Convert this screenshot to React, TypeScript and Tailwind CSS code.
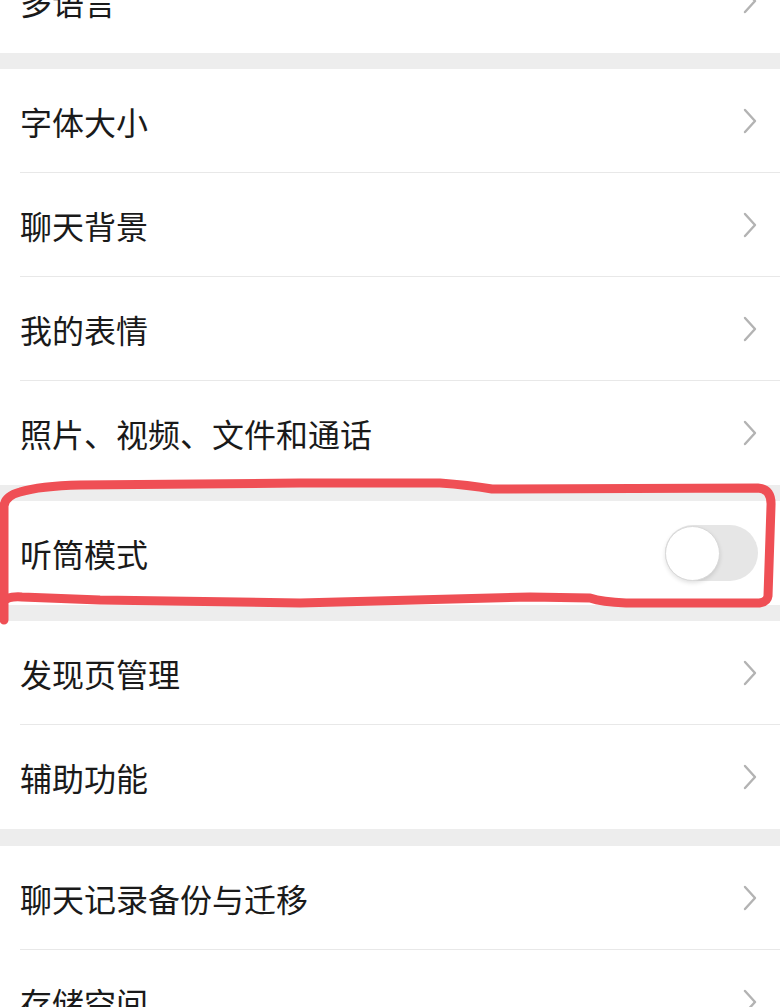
import React from "react";

const font = {
  fontFamily: '"Noto Sans CJK SC", "Noto Sans", sans-serif',
};

function Chevron() {
  return (
    <svg width="16" height="28" viewBox="0 0 16 28" fill="none">
      <polyline
        points="3,3 13,14 3,25"
        stroke="#b3b3b3"
        strokeWidth="2.4"
        strokeLinecap="round"
        strokeLinejoin="round"
      />
    </svg>
  );
}

function Row({ label, last, toggle }: { label: string; last?: boolean; toggle?: boolean }) {
  return (
    <div className="flex h-[104px] flex-col bg-white">
      <div className="flex flex-1 items-center justify-between pl-5 pr-[22px]">
        <span className="text-[32px] leading-none text-[#1a1a1a]">{label}</span>
        {toggle ? (
          <div className="flex h-[56px] w-[93px] items-center rounded-full bg-[#e6e6e6]">
            <div className="h-[55px] w-[55px] rounded-full border border-[#d9d9d9] bg-white shadow-[0_2px_4px_rgba(0,0,0,0.12)]" />
          </div>
        ) : (
          <Chevron />
        )}
      </div>
      {!last && <div className="ml-5 h-px bg-[#e8e8e8]" />}
    </div>
  );
}

function Group({ items, toggle }: { items: string[]; toggle?: boolean }) {
  return (
    <div className="flex flex-col">
      {items.map((label, i) => (
        <Row key={label} label={label} last={i === items.length - 1} toggle={toggle} />
      ))}
    </div>
  );
}

export default function App() {
  return (
    <div className="relative h-[1007px] w-[780px] overflow-hidden bg-[#ededed]" style={font}>
      <div className="-mt-[51px] flex flex-col">
        <Group items={["多语言"]} />
        <div className="h-[16px]" />
        <Group items={["字体大小", "聊天背景", "我的表情", "照片、视频、文件和通话"]} />
        <div className="h-[16px]" />
        <Group items={["听筒模式"]} toggle />
        <div className="h-[16px]" />
        <Group items={["发现页管理", "辅助功能"]} />
        <div className="h-[17px]" />
        <Group items={["聊天记录备份与迁移", "存储空间"]} />
      </div>

      <svg
        className="pointer-events-none absolute left-0 top-0"
        width="780"
        height="1007"
        viewBox="0 0 780 1007"
        fill="none"
      >
        <path
          d="M 4 620 L 4 506 Q 5 496 20 492 Q 40 486 80 485 L 300 483 L 440 483 Q 468 485 492 489 L 758 488 Q 772 489 771 506 L 768 596 Q 767 604 752 603 L 626 603 Q 602 602 590 598 L 530 597 L 300 603 L 100 600 L 22 597 Q 6 596 4 602"
          stroke="#ef4f55"
          strokeWidth="9"
          strokeLinecap="round"
          strokeLinejoin="round"
        />
      </svg>
    </div>
  );
}
